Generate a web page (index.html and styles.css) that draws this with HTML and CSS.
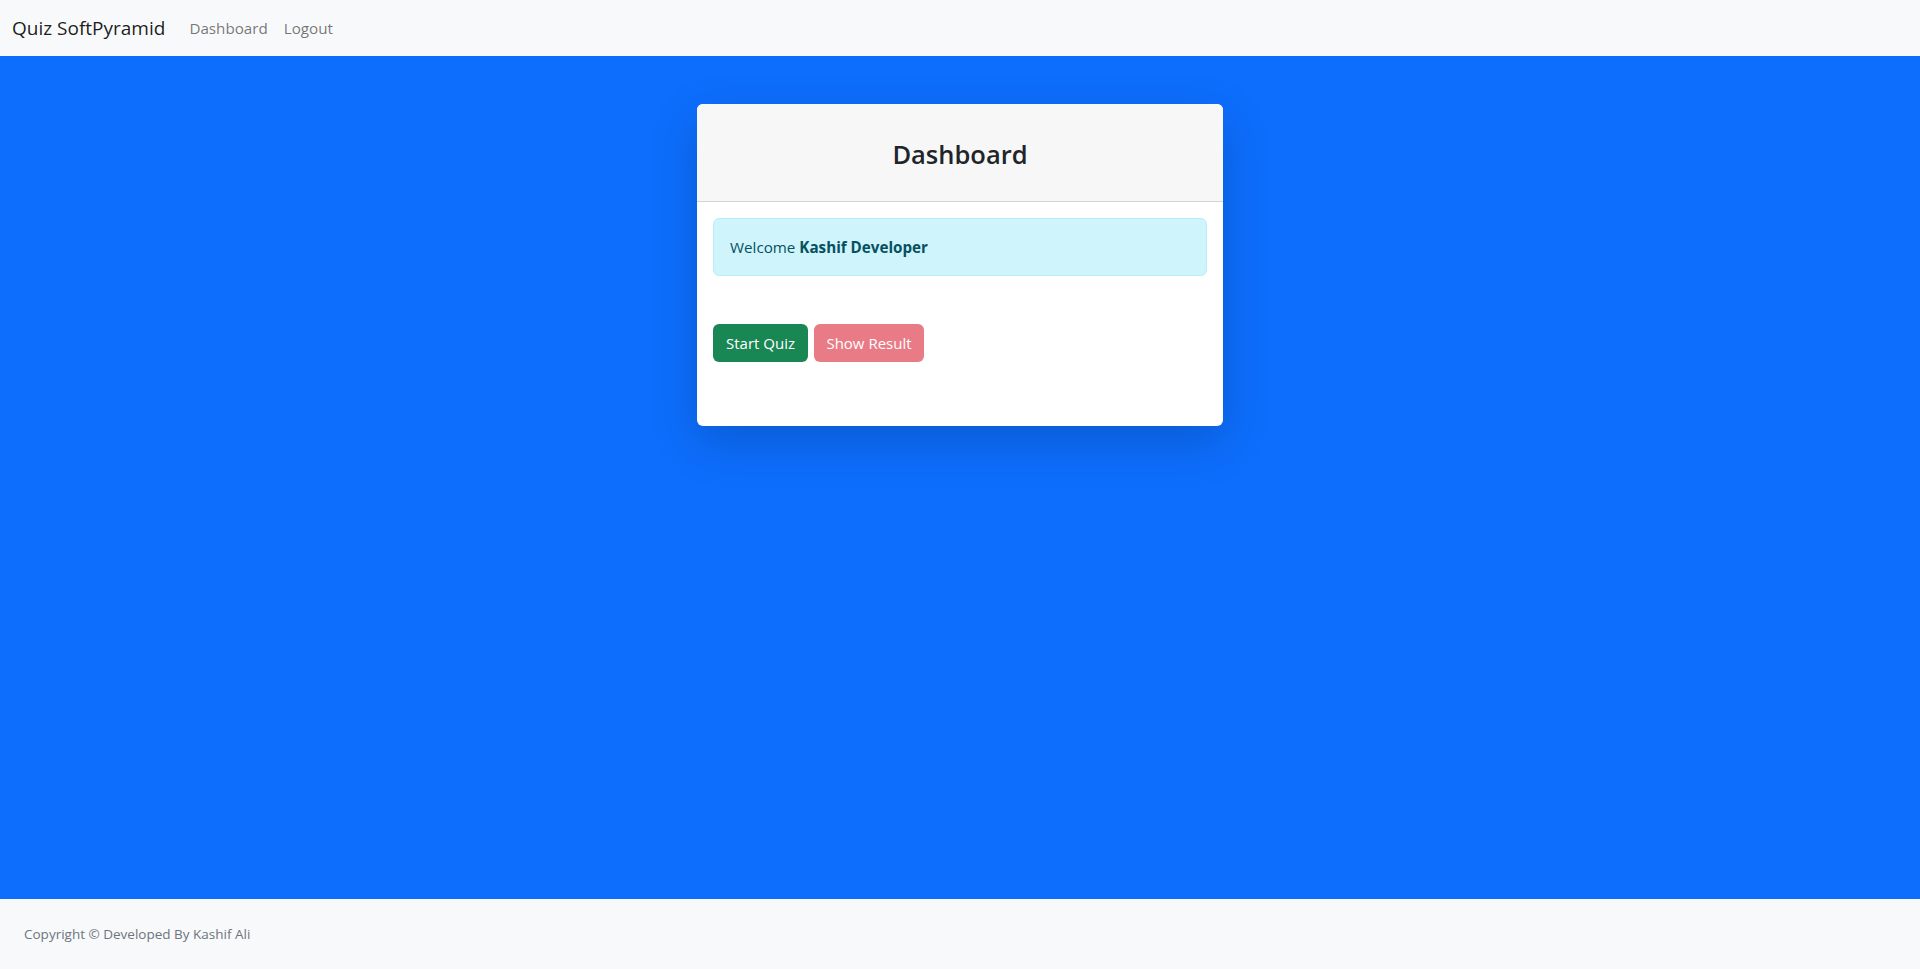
FILE: index.html
```html
<!DOCTYPE html>
<html lang="en">
<head>
<meta charset="utf-8">
<title>Quiz SoftPyramid - Dashboard</title>
<link rel="stylesheet" href="styles.css">
</head>
<body>
<nav class="navbar">
  <a class="brand" href="#">Quiz SoftPyramid</a>
  <ul class="nav">
    <li><a class="nav-link" href="#">Dashboard</a></li>
    <li><a class="nav-link" href="#">Logout</a></li>
  </ul>
</nav>
<main class="main">
  <div class="card">
    <div class="card-header">
      <h3 class="card-title">Dashboard</h3>
    </div>
    <div class="card-body">
      <div class="alert">Welcome <strong>Kashif Developer</strong></div>
      <div class="actions">
        <a class="btn btn-success" href="#">Start Quiz</a>
        <a class="btn btn-danger disabled" href="#">Show Result</a>
      </div>
    </div>
  </div>
</main>
<footer class="footer">
  <span class="copy">Copyright © Developed By Kashif Ali</span>
</footer>
</body>
</html>
```

FILE: styles.css
```css
* { box-sizing: border-box; }
html, body { height: 100%; }
body {
  margin: 0;
  font-family: "Open Sans", "Noto Sans", "Liberation Sans", sans-serif;
  font-size: 15px;
  line-height: 1.5;
  color: #212529;
  display: flex;
  flex-direction: column;
  min-height: 100vh;
}
a { text-decoration: none; }

.navbar {
  height: 56px;
  background: #f8f9fa;
  display: flex;
  align-items: center;
  padding: 8px 12px;
  flex-shrink: 0;
}
.brand {
  font-size: 19px;
  line-height: 30px;
  color: rgba(0,0,0,0.9);
  margin-right: 16px;
}
.nav {
  list-style: none;
  margin: 0;
  padding: 0;
  display: flex;
}
.nav-link {
  display: block;
  padding: 8px 8px;
  font-size: 15.2px;
  color: rgba(0,0,0,0.55);
}

.main {
  flex: 1;
  background: #0d6efd;
  display: flex;
  justify-content: center;
  align-items: flex-start;
  padding-top: 48px;
}
.card {
  width: 526px;
  background: #fff;
  border-radius: 6px;
  box-shadow: 0 16px 48px rgba(0,0,0,0.175);
  overflow: hidden;
}
.card-header {
  background: #f7f7f7;
  border-bottom: 1px solid #d3d3d3;
  height: 98px;
  display: flex;
  align-items: center;
  justify-content: center;
  padding-top: 4px;
}
.card-title {
  margin: 0;
  font-size: 25.5px;
  font-weight: 600;
  line-height: 1.2;
  color: #212529;
}
.card-body {
  padding: 16px;
}
.alert {
  background: #cff4fc;
  border: 1px solid #b6effb;
  color: #055160;
  border-radius: 6px;
  padding: 16px;
  height: 58px;
  line-height: 24px;
  font-size: 15.2px;
  margin-bottom: 16px;
}
.alert strong { font-weight: 700; }
.actions {
  display: flex;
  gap: 6px;
  padding: 32px 0 48px;
}
.btn {
  display: inline-flex;
  align-items: center;
  justify-content: center;
  height: 38px;
  padding: 0 11px;
  border-radius: 6px;
  font-size: 15px;
  color: #fff;
}
.btn-success { background: #198754; width: 95px; }
.btn-danger { background: #dc3545; width: 110px; }
.btn.disabled { opacity: 0.65; pointer-events: none; }

.footer {
  background: #f8f9fa;
  height: 70px;
  flex-shrink: 0;
  display: flex;
  align-items: center;
  padding: 0 24px;
}
.copy {
  font-size: 13.5px;
  color: #6c757d;
}
```
